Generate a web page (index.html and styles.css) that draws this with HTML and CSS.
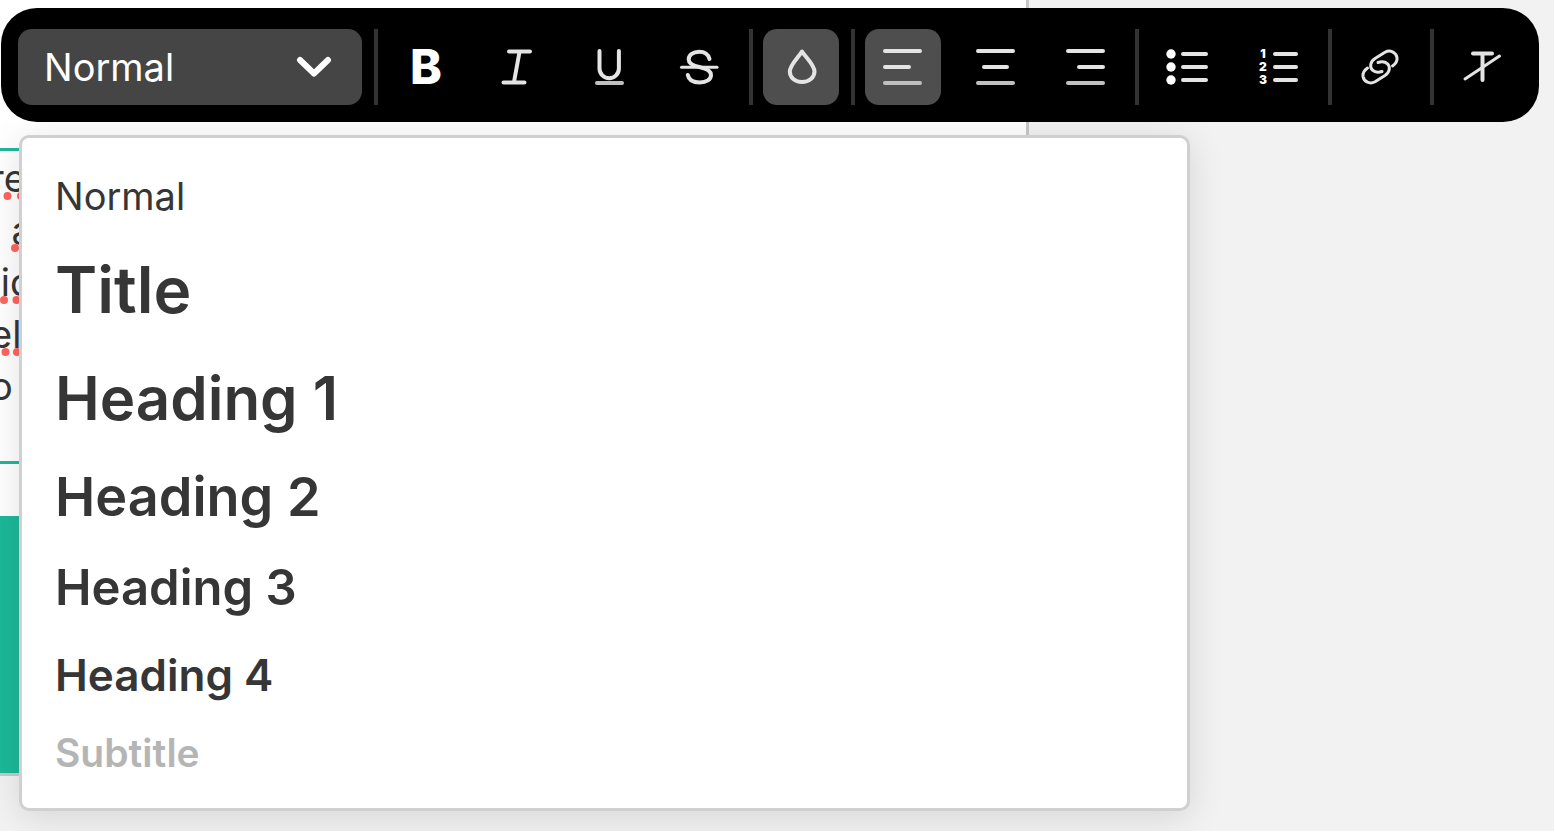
FILE: index.html
```html
<!DOCTYPE html>
<html lang="en">
<head>
<meta charset="utf-8">
<title>Text style editor</title>
<link rel="stylesheet" href="styles.css">
</head>
<body>
<main class="workspace">
  <section class="page">
    <div class="text-block">
      <p><span class="misspelt">re</span></p>
      <p>&nbsp;&nbsp;<span class="misspelt">a</span></p>
      <p>&nbsp;<span class="misspelt">id</span></p>
      <p><span class="misspelt">el</span></p>
      <p>o</p>
    </div>
    <div class="banner"></div>
  </section>

  <div class="toolbar" role="toolbar" aria-label="Text formatting">
    <div class="style-picker">
      <select class="style-select" aria-label="Text style">
        <option>Normal</option>
        <option>Title</option>
        <option>Heading 1</option>
        <option>Heading 2</option>
        <option>Heading 3</option>
        <option>Heading 4</option>
        <option>Subtitle</option>
      </select>
      <svg class="chevron" viewBox="0 0 36 24" aria-hidden="true"><path d="M4 5 L18 18.500 L32 5"/></svg>
    </div>
    <div class="group">
      <button class="tool bold" type="button" aria-label="Bold">B</button>
      <button class="tool" type="button" aria-label="Italic">
        <svg viewBox="0 0 76 76"><path d="M30 22.500H51M24.500 53.500H45.500M40.500 23L35 53"/></svg>
      </button>
      <button class="tool" type="button" aria-label="Underline">
        <svg viewBox="0 0 76 76"><path d="M29.500 22V39.500a9.700 9.700 0 0 0 19.400 0V22"/><path class="dim" d="M27 54H52"/></svg>
      </button>
      <button class="tool" type="button" aria-label="Strikethrough">
        <svg viewBox="0 0 76 76"><path d="M48.500 30C47.500 25.500 43.500 22.800 38.300 22.800C32 22.800 27.700 26 27.700 30.500C27.700 35 32 36.700 38.300 38C45.500 39.500 50 41.500 50 46C50 50.500 45.500 53.500 38.800 53.500C32 53.500 27.700 50.500 26.800 46"/><path class="thin" d="M20.500 38.200H56"/></svg>
      </button>
    </div>
    <div class="group">
      <button class="tool active" type="button" aria-label="Text color">
        <svg viewBox="0 0 76 76"><path d="M39 22.500C36 27.500 26.800 36 26.800 42.500C26.800 48.500 32 53 39 53C46 53 51.500 48.500 51.500 42.500C51.500 36 42 27.500 39 22.500Z"/></svg>
      </button>
    </div>
    <div class="group">
      <button class="tool active" type="button" aria-label="Align left">
        <svg viewBox="0 0 76 76"><path d="M20 22H55M20 38H44"/><path class="dim" d="M20 54H55"/></svg>
      </button>
      <button class="tool" type="button" aria-label="Align center">
        <svg viewBox="0 0 76 76"><path d="M22 22H57M28 38H51"/><path class="dim" d="M22 54H57"/></svg>
      </button>
      <button class="tool" type="button" aria-label="Align right">
        <svg viewBox="0 0 76 76"><path d="M21 22H56M32 38H56"/><path class="dim" d="M21 54H56"/></svg>
      </button>
    </div>
    <div class="group">
      <button class="tool" type="button" aria-label="Bulleted list">
        <svg viewBox="0 0 76 76"><g class="dots"><circle cx="22" cy="25" r="4.700"/><circle cx="22" cy="38" r="4.700"/><circle cx="22" cy="51" r="4.700"/></g><path d="M34 25H57M34 38H57M34 51H57"/></svg>
      </button>
      <button class="tool" type="button" aria-label="Numbered list">
        <svg viewBox="0 0 76 76"><g class="digits"><text x="23" y="29">1</text><text x="23" y="42">2</text><text x="23" y="55">3</text></g><path d="M35 25H56M35 38H56M35 51H56"/></svg>
      </button>
    </div>
    <div class="group">
      <button class="tool" type="button" aria-label="Link">
        <svg class="link" viewBox="0 0 76 76"><path d="M50.500 37C54 34.500 55.500 32 55 28.500C54 23 48 20.500 43 23.300L33 29.500C28 32.800 27.500 38 30.500 41.200C33 43.500 36.500 43.600 40 42.500"/><path d="M25.500 39C22 41.500 20.500 44 21 47.500C22 53 28 55.500 33 52.700L43 46.500C48 43.200 48.500 38 45.500 34.800C43 32.500 39.500 32.400 36 33.500"/></svg>
      </button>
    </div>
    <div class="group">
      <button class="tool" type="button" aria-label="Clear formatting">
        <svg viewBox="0 0 76 76"><path d="M29 24.500H48M38.500 25V51"/><path class="thin" d="M21 50L55.500 27"/></svg>
      </button>
    </div>
  </div>

  <div class="menu" role="listbox" aria-label="Text styles">
    <button class="item" type="button" role="option" aria-selected="true">Normal</button>
    <button class="item title" type="button" role="option">Title</button>
    <button class="item heading-1" type="button" role="option">Heading 1</button>
    <button class="item heading-2" type="button" role="option">Heading 2</button>
    <button class="item heading-3" type="button" role="option">Heading 3</button>
    <button class="item heading-4" type="button" role="option">Heading 4</button>
    <button class="item subtitle" type="button" role="option">Subtitle</button>
  </div>
</main>
</body>
</html>
```

FILE: styles.css
```css
* {
  box-sizing: border-box;
}

body {
  margin: 0;
  background: #fff;
  color: #363636;
  font-family: Inter, "Liberation Sans", sans-serif;
}

.workspace {
  position: relative;
  overflow: hidden;
  margin-right: 2px;
  padding-bottom: 55px;
  background: #f2f2f2;
}

.page {
  width: 66.200%;
  padding-top: 148px;
  border-right: 3px solid #c8c8c8;
  border-bottom: 3px solid #c8c8c8;
  background: #fff;
}

.text-block {
  padding-top: 1px;
  padding-bottom: 49px;
  border-top: 3px solid #1db899;
  border-bottom: 3px solid #1db899;
  font-size: 38px;
  font-weight: 400;
  line-height: 52px;
}

.text-block p {
  margin: 0 0 0 -10px;
}

.misspelt {
  text-decoration: underline dotted #ff655f 8px;
  text-decoration-skip-ink: none;
  text-underline-offset: 0;
}

.banner {
  height: 257px;
  margin-top: 52px;
  background: #1db899;
}

.toolbar {
  position: absolute;
  z-index: 2;
  top: 8px;
  left: 1px;
  right: 15px;
  display: flex;
  align-items: center;
  padding: 21px 19px 17px 17px;
  border-radius: 36px;
  background: #000;
}

.style-picker {
  position: relative;
  flex: 1;
}

.style-select {
  display: block;
  width: 100%;
  height: 76px;
  padding: 0 26px;
  border: 0;
  border-radius: 14px;
  appearance: none;
  background: #454545;
  color: #fff;
  font-family: inherit;
  font-size: 38px;
  font-weight: 400;
}

.chevron {
  position: absolute;
  top: 26px;
  right: 30px;
  width: 36px;
  height: 24px;
  fill: none;
  stroke: #fff;
  stroke-width: 6;
  stroke-linecap: round;
  stroke-linejoin: round;
  pointer-events: none;
}

.group {
  display: flex;
  gap: 15px;
}

.group::before {
  content: "";
  width: 4px;
  height: 76px;
  margin: 0 -5px 0 12px;
  background: #333;
}

.tool {
  display: block;
  width: 76px;
  height: 76px;
  padding: 0;
  border: 0;
  border-radius: 14px;
  background: transparent;
  color: #fff;
}

.active {
  background: #4e4e4e;
}

.bold {
  font-family: Inter, "Liberation Sans", sans-serif;
  font-size: 48px;
  font-weight: 800;
  line-height: 76px;
}

.tool svg {
  display: block;
  width: 76px;
  height: 76px;
  fill: none;
  stroke: #e4e4e4;
  stroke-width: 4;
  stroke-linecap: round;
  stroke-linejoin: round;
}

.tool .link {
  stroke-width: 3;
}

.tool .thin {
  stroke-width: 3;
}

.tool .dim {
  stroke: #c0c0c0;
}

.dots {
  fill: #fff;
  stroke: none;
}

.digits {
  fill: #fff;
  stroke: none;
  font-family: Inter, "Liberation Sans", sans-serif;
  font-size: 12px;
  font-weight: 900;
  text-anchor: middle;
}

.menu {
  position: absolute;
  z-index: 1;
  top: 135px;
  left: 19px;
  right: 364px;
  display: flex;
  flex-direction: column;
  gap: 30px;
  padding: 34px 33px;
  border: 3px solid #d0d0d0;
  border-radius: 10px;
  background: #fff;
  box-shadow: 0 6px 36px rgba(0, 0, 0, 0.12);
}

.item {
  padding: 0;
  border: 0;
  background: transparent;
  color: #363636;
  font-family: inherit;
  font-size: 38px;
  font-weight: 400;
  line-height: 48px;
  text-align: left;
}

.title {
  font-size: 64px;
  font-weight: 600;
  line-height: 80px;
}

.heading-1 {
  font-size: 60px;
  font-weight: 600;
  line-height: 76px;
}

.heading-2 {
  font-size: 54px;
  font-weight: 600;
  line-height: 62px;
}

.heading-3 {
  font-size: 49px;
  font-weight: 600;
  line-height: 60px;
}

.heading-4 {
  font-size: 44px;
  font-weight: 600;
  line-height: 54px;
}

.subtitle {
  font-size: 39px;
  color: #b5b5b5;
  font-weight: 600;
  line-height: 42px;
}
```
